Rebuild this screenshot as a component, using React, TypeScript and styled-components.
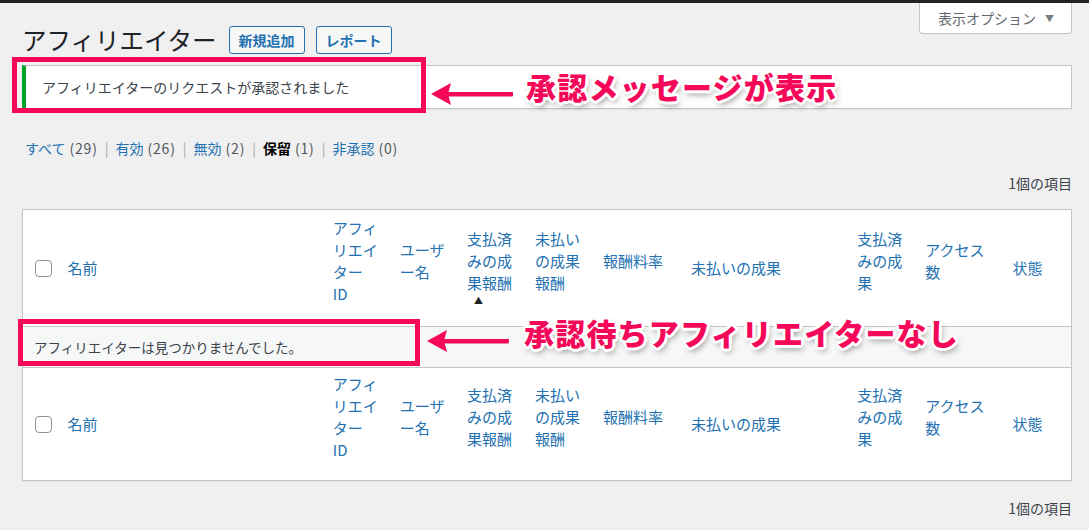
import React from 'react';
import styled, { createGlobalStyle } from 'styled-components';

type Indicator = 'none' | 'hidden' | 'asc';

type Column = {
  key: string,
  lines: string[],
  width: number,
  indicator: Indicator,
};

const columns: Column[] = [
  { key: 'name', lines: ['名前'], width: 265, indicator: 'none' },
  { key: 'id', lines: ['アフィ', 'リエイ', 'ター', 'ID'], width: 67, indicator: 'hidden' },
  { key: 'user', lines: ['ユーザ', 'ー名'], width: 67, indicator: 'hidden' },
  { key: 'paid', lines: ['支払済', 'みの成', '果報酬'], width: 68, indicator: 'asc' },
  { key: 'unpaidEarn', lines: ['未払い', 'の成果', '報酬'], width: 68, indicator: 'hidden' },
  { key: 'rate', lines: ['報酬料率'], width: 88, indicator: 'hidden' },
  { key: 'unpaid', lines: ['未払いの成果'], width: 166, indicator: 'none' },
  { key: 'paidRef', lines: ['支払済', 'みの成', '果'], width: 68, indicator: 'hidden' },
  { key: 'visits', lines: ['アクセス', '数'], width: 87, indicator: 'hidden' },
  { key: 'status', lines: ['状態'], width: 69, indicator: 'none' },
];

const views = [
  { label: 'すべて', count: 29 },
  { label: '有効', count: 26 },
  { label: '無効', count: 2 },
  { label: '保留', count: 1, current: true },
  { label: '非承認', count: 0 },
];

export default function App() {
  return <Page>
    <GlobalStyle />
    <AdminBar />
    <Wrap>
      <TopRow>
        <HeadingGroup>
          <Title>アフィリエイター</Title>
          <ActionButton>新規追加</ActionButton>
          <ActionButton>レポート</ActionButton>
        </HeadingGroup>
        <OptionsButton>表示オプション<Caret>▼</Caret></OptionsButton>
      </TopRow>

      <Notice>アフィリエイターのリクエストが承認されました</Notice>

      <Views>
        {views.map((v, i) => <React.Fragment key={v.label}>
          {i > 0 && <Separator>|</Separator>}
          <ViewItem $current={!!v.current}>
            {v.label}<Count>({v.count})</Count>
          </ViewItem>
        </React.Fragment>)}
      </Views>

      <TableNav>1個の項目</TableNav>

      <ListTable>
        <colgroup>
          <col style={{ width: 35 }} />
          {columns.map(c => <col key={c.key} style={{ width: c.width }} />)}
        </colgroup>
        <thead>
          <HeaderRow columns={columns} position="head" />
        </thead>
        <tbody>
          <tr>
            <EmptyCell colSpan={columns.length + 1}>アフィリエイターは見つかりませんでした。</EmptyCell>
          </tr>
        </tbody>
        <tfoot>
          <HeaderRow columns={columns} position="foot" />
        </tfoot>
      </ListTable>

      <TableNav $bottom>1個の項目</TableNav>
    </Wrap>

    <Highlight style={{ left: 12, top: 57, width: 414, height: 56 }} />
    <Arrow left={431} top={82} />
    <Callout style={{ left: 526, top: 68 }}>承認メッセージが表示</Callout>

    <Highlight style={{ left: 18, top: 319, width: 402, height: 47 }} />
    <Arrow left={427} top={329} />
    <Callout style={{ left: 524, top: 314 }}>承認待ちアフィリエイターなし</Callout>
  </Page>;
}

function HeaderRow({ columns, position }: { columns: Column[], position: 'head' | 'foot' }) {
  return <tr>
    <CheckCell $position={position}><Checkbox /></CheckCell>
    {columns.map(c => {
      // the sort arrow is only drawn in the header
      const ind = position === 'foot' && c.indicator === 'asc' ? 'hidden' : c.indicator;
      return <HeadCell key={c.key} $position={position}>
        <HeadLabel>
          {c.lines.map((l, i) => <React.Fragment key={i}>{i > 0 && <br />}{l}</React.Fragment>)}
        </HeadLabel>
        {ind !== 'none' && <SortIndicator $visible={ind === 'asc'}>▲</SortIndicator>}
      </HeadCell>;
    })}
  </tr>;
}

function Arrow({ left, top }: { left: number, top: number }) {
  return <ArrowSvg style={{ left, top }} width="82" height="24" viewBox="0 0 82 24">
    <polygon points="0,12 20,1 17,12 20,23" fill="#f5075a" />
    <rect x="15" y="10" width="67" height="4.5" rx="1" fill="#f5075a" />
  </ArrowSvg>;
}

const GlobalStyle = createGlobalStyle`
  body {
    margin: 0;
    background: #f0f0f1;
    font-family: "Noto Sans CJK JP", "Noto Sans", sans-serif;
    color: #3c434a;
  }
`;

const Page = styled.div`
  position: relative;
  width: 1089px;
  height: 530px;
  overflow: hidden;
`;

const AdminBar = styled.div`
  height: 3px;
  background: #1d2327;
`;

const Wrap = styled.div`
  padding: 0 17px 0 22px;
`;

const TopRow = styled.div`
  display: flex;
  justify-content: space-between;
  align-items: flex-start;
`;

const HeadingGroup = styled.div`
  display: flex;
  align-items: center;
  margin-top: 22px;
`;

const Title = styled.h1`
  margin: 0 12px 0 0;
  font-size: 24.5px;
  font-weight: 400;
  line-height: 30px;
  color: #1d2327;
`;

const ActionButton = styled.span`
  display: inline-flex;
  align-items: center;
  height: 26px;
  padding: 0 9px;
  margin-right: 11px;
  border: 1px solid #2271b1;
  border-radius: 3px;
  background: #f6f7f7;
  color: #2271b1;
  font-size: 14px;
  font-weight: 600;
`;

const OptionsButton = styled.div`
  display: flex;
  align-items: center;
  height: 30px;
  padding: 0 17px 0 18px;
  background: #fff;
  border: 1px solid #c3c4c7;
  border-top: none;
  border-radius: 0 0 4px 4px;
  color: #646970;
  font-size: 14px;
`;

const Caret = styled.span`
  font-size: 9px;
  margin-left: 9px;
  color: #787c82;
`;

const Notice = styled.div`
  margin-top: 10px;
  height: 42px;
  display: flex;
  align-items: center;
  padding: 0 16px;
  background: #fff;
  border: 1px solid #c3c4c7;
  border-left: 4px solid #00a32a;
  box-shadow: 0 1px 1px rgba(0, 0, 0, 0.04);
  font-size: 14px;
  color: #3c434a;
`;

const Views = styled.div`
  display: flex;
  align-items: center;
  margin: 29px 0 0 3px;
  height: 20px;
  font-size: 14px;
`;

const ViewItem = styled.span<{ $current: boolean }>`
  color: ${p => p.$current ? '#000' : '#2271b1'};
  font-weight: ${p => p.$current ? 600 : 400};
`;

const Count = styled.span`
  margin-left: 4px;
  letter-spacing: 0.8px;
  color: #50575e;
  font-weight: 400;
`;

const Separator = styled.span`
  margin: 0 7px;
  color: #a7aaad;
`;

const TableNav = styled.div<{ $bottom?: boolean }>`
  margin-top: ${p => p.$bottom ? '17px' : '15px'};
  margin-bottom: 16px;
  text-align: right;
  line-height: 20px;
  font-size: 14px;
  color: #3c434a;
`;

const ListTable = styled.table`
  width: 1050px;
  table-layout: fixed;
  border-collapse: collapse;
  background: #fff;
  border: 1px solid #c3c4c7;
  box-shadow: 0 1px 1px rgba(0, 0, 0, 0.04);
`;

const HeadCell = styled.th<{ $position: 'head' | 'foot' }>`
  padding: ${p => p.$position === 'head' ? '7px 10px' : '5px 10px'};
  text-align: left;
  vertical-align: middle;
  font-weight: 400;
  font-size: 15px;
  line-height: 22px;
  color: #2271b1;
  ${p => p.$position === 'head'
    ? 'border-bottom: 1px solid #c3c4c7;'
    : 'border-top: 1px solid #c3c4c7;'}
`;

const HeadLabel = styled.span`
  display: block;
  white-space: nowrap;
`;

const SortIndicator = styled.span<{ $visible: boolean }>`
  display: block;
  height: 14px;
  line-height: 14px;
  padding-left: 7px;
  font-size: 9px;
  color: #1d2327;
  visibility: ${p => p.$visible ? 'visible' : 'hidden'};
`;

const CheckCell = styled.th<{ $position: 'head' | 'foot' }>`
  padding: 0 0 0 12px;
  vertical-align: middle;
  text-align: left;
  ${p => p.$position === 'head'
    ? 'border-bottom: 1px solid #c3c4c7;'
    : 'border-top: 1px solid #c3c4c7;'}
`;

const Checkbox = styled.span`
  display: block;
  width: 15px;
  height: 15px;
  border: 1px solid #8c8f94;
  border-radius: 4px;
  background: #fff;
`;

const EmptyCell = styled.td`
  height: 40px;
  padding: 0 11px;
  background: #f6f7f7;
  font-size: 13.5px;
  color: #3c434a;
`;

const Highlight = styled.div`
  position: absolute;
  box-sizing: border-box;
  border: 5px solid #f5075a;
`;

const ArrowSvg = styled.svg`
  position: absolute;
`;

const Callout = styled.div`
  position: absolute;
  font-size: 30px;
  font-weight: 900;
  line-height: 36px;
  letter-spacing: 1.2px;
  color: #f5075a;
  white-space: nowrap;
  text-shadow:
    2px 0 0 #fff, -2px 0 0 #fff, 0 2px 0 #fff, 0 -2px 0 #fff,
    2px 2px 0 #fff, -2px -2px 0 #fff, 2px -2px 0 #fff, -2px 2px 0 #fff,
    3px 0 0 #fff, -3px 0 0 #fff, 0 3px 0 #fff, 0 -3px 0 #fff,
    2px 4px 6px rgba(0, 0, 0, 0.45);
`;
